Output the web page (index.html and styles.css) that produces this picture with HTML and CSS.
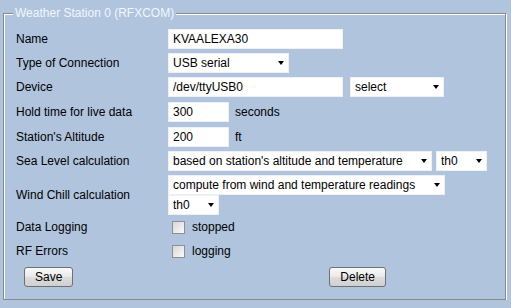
FILE: index.html
```html
<!DOCTYPE html>
<html lang="en">
<head>
  <meta charset="UTF-8" />
  <title>Weather Station 0</title>
  <link rel="stylesheet" href="styles.css">
</head>
<body>
  <fieldset class="station">
    <legend>Weather Station 0 (RFXCOM)</legend>

    <div class="row">
      <label class="caption">Name</label>
      <input type="text" class="wide" value="KVAALEXA30">
    </div>

    <div class="row">
      <label class="caption">Type of Connection</label>
      <span class="pick"><select class="w-type"><option>USB serial</option></select></span>
    </div>

    <div class="row">
      <label class="caption">Device</label>
      <input type="text" class="wide" value="/dev/ttyUSB0">
      <span class="pick spaced"><select class="w-device"><option>select</option></select></span>
    </div>

    <div class="row tall">
      <label class="caption">Hold time for live data</label>
      <input type="text" class="short" value="300">
      <span class="unit">seconds</span>
    </div>

    <div class="row tall">
      <label class="caption">Station's Altitude</label>
      <input type="text" class="short" value="200">
      <span class="unit">ft</span>
    </div>

    <div class="row">
      <label class="caption">Sea Level calculation</label>
      <span class="pick"><select class="w-sea"><option>based on station's altitude and temperature</option></select></span>
      <span class="pick near"><select class="w-th"><option>th0</option></select></span>
    </div>

    <div class="row double">
      <label class="caption">Wind Chill calculation</label>
      <div class="stack">
        <span class="pick"><select class="w-wind"><option>compute from wind and temperature readings</option></select></span>
        <span class="pick"><select class="w-th"><option>th0</option></select></span>
      </div>
    </div>

    <div class="row">
      <label class="caption">Data Logging</label>
      <input type="checkbox" class="tick">
      <span>stopped</span>
    </div>

    <div class="row">
      <label class="caption">RF Errors</label>
      <input type="checkbox" class="tick">
      <span>logging</span>
    </div>

    <div class="actions">
      <button type="button">Save</button>
      <button type="button" class="delete">Delete</button>
    </div>
  </fieldset>
</body>
</html>
```

FILE: styles.css
```css
body {
  margin: 0;
  background-color: #b0c4de;
  font-family: "Liberation Sans", Arial, sans-serif;
  font-size: 12px;
  color: #000;
}

.station {
  margin: 6px 5px 0 3px;
  padding: 7px 12px 8px 12px;
  border: 1px solid #898989;
  box-shadow: 1px 1px 0 #fff, inset 1px 1px 0 #fff;
}

.station legend {
  margin-left: -3px;
  padding: 0 2px;
  background-color: #b0c4de;
  color: #f2f6fc;
  line-height: 14px;
}

.row {
  display: flex;
  align-items: center;
  min-height: 20px;
  padding: 2px 0;
}

.row.tall {
  padding: 3px 0 2px;
}

.row.double {
  padding: 2px 0 0;
}

.caption {
  width: 152px;
  flex-shrink: 0;
}

input[type="text"] {
  box-sizing: border-box;
  height: 20px;
  margin: 0;
  padding: 0 4px;
  border: 1px solid #eef0f3;
  background: #fff;
  font: inherit;
  color: #000;
}

.wide {
  width: 175px;
}

.short {
  width: 61px;
}

.unit {
  margin-left: 6px;
}

.pick {
  position: relative;
  display: inline-block;
}

.pick::after {
  content: "";
  position: absolute;
  right: 5px;
  top: 8px;
  border-left: 3.5px solid transparent;
  border-right: 3.5px solid transparent;
  border-top: 4px solid #000;
  pointer-events: none;
}

.pick select {
  -webkit-appearance: none;
  appearance: none;
  box-sizing: border-box;
  display: block;
  height: 20px;
  margin: 0;
  padding: 0 4px;
  border: 1px solid #eef0f3;
  border-radius: 0;
  background: #fff;
  font: inherit;
  color: #000;
}

.spaced {
  margin-left: 7px;
}

.near {
  margin-left: 4px;
}

.w-type { width: 121px; }
.w-device { width: 94px; }
.w-sea { width: 264px; }
.w-th { width: 51px; }
.w-wind { width: 277px; }

.stack {
  display: flex;
  flex-direction: column;
  align-items: flex-start;
}

.tick {
  -webkit-appearance: none;
  appearance: none;
  box-sizing: border-box;
  width: 13px;
  height: 13px;
  margin: 0 7px 0 4px;
  border: 1px solid #8f8f8f;
  background: linear-gradient(135deg, #d6d6d6, #fbfbfb);
}

.actions {
  display: flex;
  align-items: center;
  padding: 4px 0 4px 8px;
}

.actions button {
  box-sizing: border-box;
  height: 20px;
  padding: 0 10px;
  border: 1px solid #707070;
  border-radius: 3px;
  background: linear-gradient(#fafafa, #e9e9e9 50%, #dcdcdc 51%, #d0d0d0);
  font: inherit;
  color: #000;
  cursor: pointer;
}

.actions .delete {
  margin-left: 256px;
}
```
